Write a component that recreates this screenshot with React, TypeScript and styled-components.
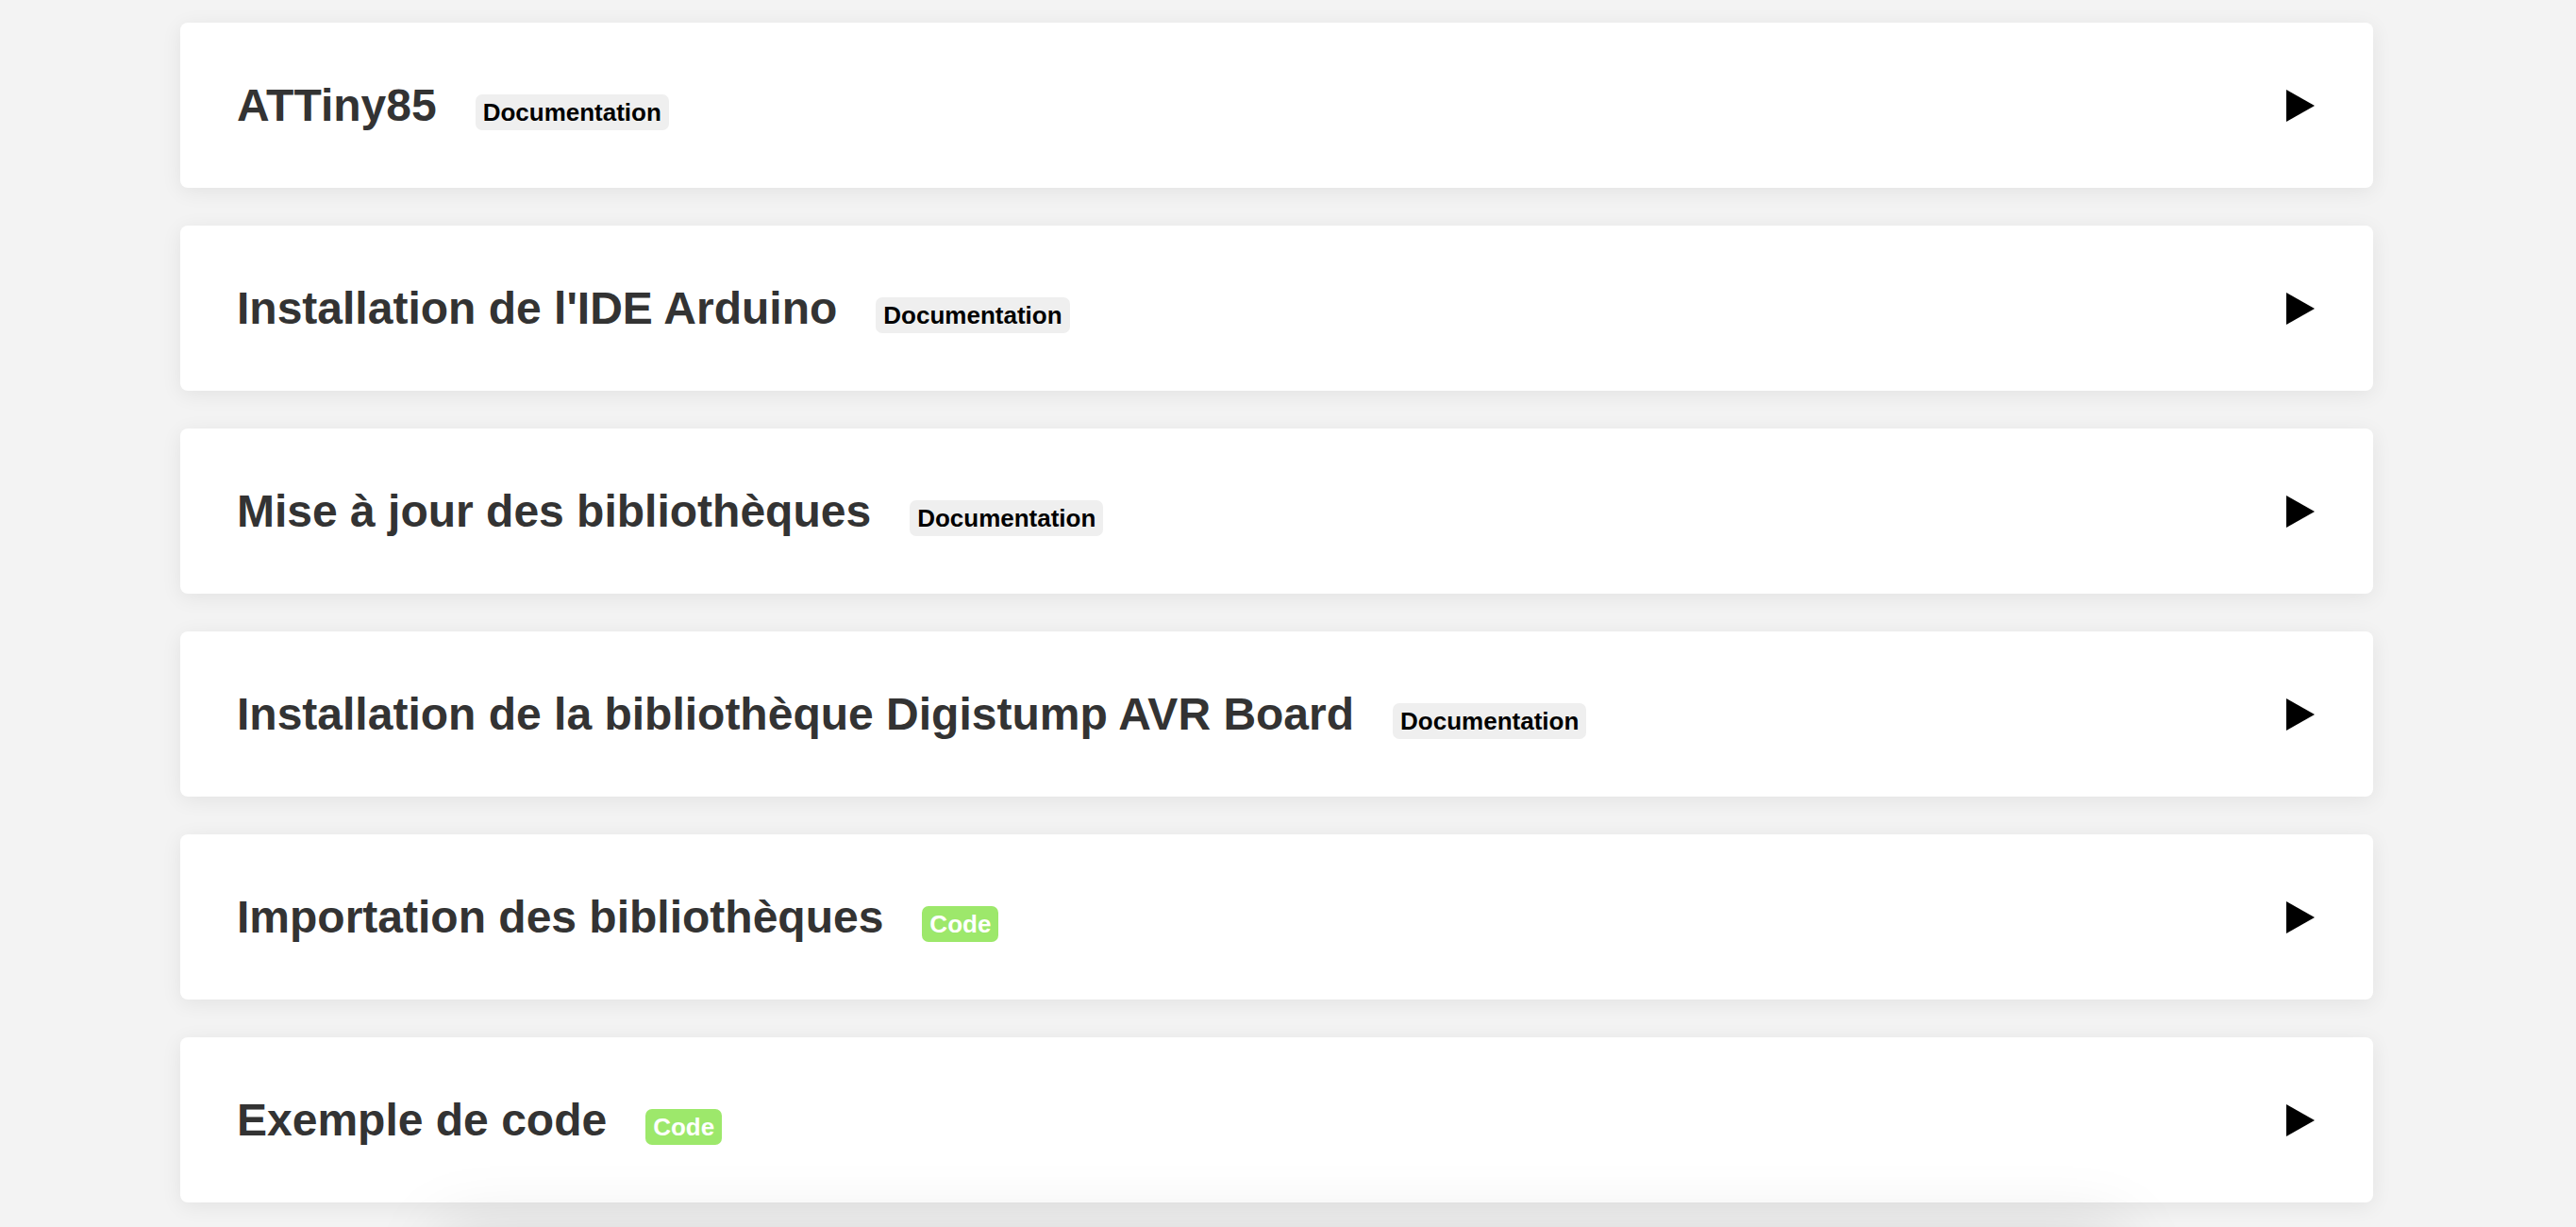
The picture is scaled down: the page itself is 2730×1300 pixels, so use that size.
import React from "react";
import styled, { createGlobalStyle } from "styled-components";

const GlobalStyle = createGlobalStyle`
  html, body {
    margin: 0;
    padding: 0;
    background: #f3f3f3;
    font-family: "Liberation Sans", Arial, Helvetica, sans-serif;
    overflow: hidden;
  }
`;

const Page = styled.div`
  height: 1300px;
  overflow: hidden;
  padding-top: 24px;
  box-sizing: border-box;
`;

const List = styled.div`
  width: 2324px;
  margin-left: 191px;
  display: flex;
  flex-direction: column;
  gap: 40px;
`;

const Card = styled.div`
  height: 175px;
  box-sizing: border-box;
  background: #ffffff;
  border-radius: 8px;
  box-shadow: 0 4px 22px rgba(0, 0, 0, 0.07);
  padding: 0 62px 0 60px;
  display: flex;
  align-items: center;
  justify-content: space-between;
`;

const Heading = styled.div`
  display: flex;
  align-items: baseline;
  gap: 41px;
`;

const Title = styled.h2`
  margin: 0;
  font-size: 48px;
  font-weight: 700;
  color: #333333;
`;

const Badge = styled.span<{ $kind: "doc" | "code" }>`
  font-size: 26px;
  font-weight: 700;
  line-height: 30px;
  padding: 4px 8px;
  border-radius: 7px;
  background: ${(p) => (p.$kind === "code" ? "#9de86b" : "#efefef")};
  color: ${(p) => (p.$kind === "code" ? "#ffffff" : "#000000")};
`;

const Arrow = styled.svg`
  width: 30px;
  height: 34px;
  flex: none;
`;

const Shade = styled.div`
  position: relative;
  z-index: 2;
  width: 1760px;
  height: 200px;
  margin: 40px 0 0 478px;
  background: #f3f3f3;
  box-shadow: 0 0 70px 10px rgba(0, 0, 0, 0.13);
`;

const items: { title: string; kind: "doc" | "code" }[] = [
  { title: "ATTiny85", kind: "doc" },
  { title: "Installation de l'IDE Arduino", kind: "doc" },
  { title: "Mise à jour des bibliothèques", kind: "doc" },
  { title: "Installation de la bibliothèque Digistump AVR Board", kind: "doc" },
  { title: "Importation des bibliothèques", kind: "code" },
  { title: "Exemple de code", kind: "code" },
];

export default function App() {
  return (
    <>
      <GlobalStyle />
      <Page>
        <List>
          {items.map((it) => (
            <Card key={it.title}>
              <Heading>
                <Title>{it.title}</Title>
                <Badge $kind={it.kind}>{it.kind === "code" ? "Code" : "Documentation"}</Badge>
              </Heading>
              <Arrow viewBox="0 0 30 34">
                <polygon points="0,0 30,17 0,34" fill="#000" />
              </Arrow>
            </Card>
          ))}
        </List>
        <Shade />
      </Page>
    </>
  );
}
